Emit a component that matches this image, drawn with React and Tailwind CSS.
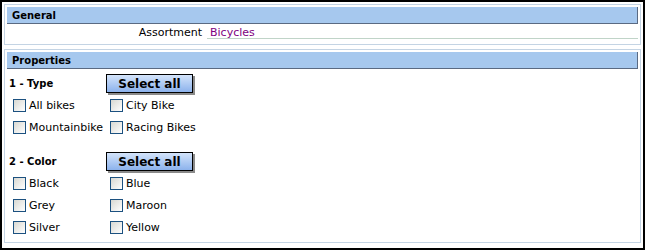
const groups = [
  { title: '1 - Type', rows: [['All bikes', 'City Bike'], ['Mountainbike', 'Racing Bikes']] },
  { title: '2 - Color', rows: [['Black', 'Blue'], ['Grey', 'Maroon'], ['Silver', 'Yellow']] },
]

function Bar({ children }) {
  return (
    <div className="flex h-[17px] items-center border-b border-r border-[#5a6a82] bg-[#a6c8ee] pl-[5px] pt-[1px] text-[10px] font-bold text-black">
      {children}
    </div>
  )
}

function Check({ label }) {
  return (
    <div className="flex w-[97px] items-start pl-[4px] pt-[3px]">
      <span className="h-[13px] w-[13px] shrink-0 border border-[#1c5180] bg-gradient-to-br from-[#d8d8d2] to-white" />
      <span className="ml-[3px] whitespace-nowrap text-[11px] leading-[13px] text-black">{label}</span>
    </div>
  )
}

export default function App() {
  return (
    <div className="box-border h-[250px] w-[645px] overflow-hidden border-2 border-black bg-white px-[2px] pt-[2px] font-['DejaVu_Sans',sans-serif]">
      <div className="border border-[#c4d4e4] p-[2px]">
        <Bar>General</Bar>
        <div className="mb-[3px] flex h-[15px] text-[11px] leading-[13px]">
          <div className="w-[200px] pr-[5px] pt-[2px] text-right text-black">Assortment</div>
          <div className="flex-1 border-b border-[#c0d4c8] pl-[3px] pt-[2px] text-[#800080]">Bicycles</div>
        </div>
      </div>

      <div className="mt-[4px] border border-[#c4d4e4] p-[2px] pb-[2px]">
        <Bar>Properties</Bar>
        <div className="pl-[2px] pt-[5px]">
          {groups.map((group, index) => (
            <div key={group.title} className={index > 0 ? 'mt-[12px]' : ''}>
              <div className="flex h-[22px] items-start">
                <div className="flex h-[19px] w-[97px] items-center text-[10px] font-bold text-black">{group.title}</div>
                <button className="flex h-[19px] w-[87px] items-center justify-center border border-black bg-gradient-to-b from-[#d4e4fa] to-[#8cb2ec] text-[12px] font-bold text-black shadow-[2px_2px_0_#8a8a8a]">
                  Select all
                </button>
              </div>
              {group.rows.map(([left, right]) => (
                <div key={left} className="flex h-[22px]">
                  <Check label={left} />
                  <Check label={right} />
                </div>
              ))}
            </div>
          ))}
        </div>
      </div>
    </div>
  )
}
